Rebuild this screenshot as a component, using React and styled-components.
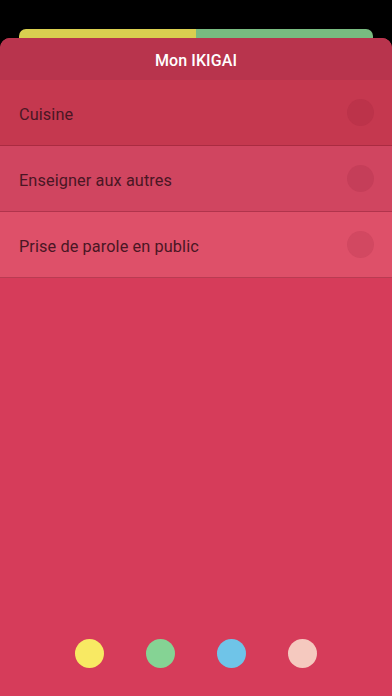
import React from "react";
import styled, { createGlobalStyle } from "styled-components";

const Global = createGlobalStyle`
  html, body { margin: 0; padding: 0; background: #000; }
  body { font-family: Roboto, "Noto Sans", sans-serif; }
  #root { min-height: 696px; }
`;

const Screen = styled.div`
  width: 392px;
  height: 696px;
  background: #000;
  display: flex;
  flex-direction: column;
  padding-top: 29px;
  box-sizing: border-box;
  overflow: hidden;
`;

const BackCard = styled.div`
  margin: 0 19px;
  height: 9px;
  border-radius: 7px 7px 0 0;
  display: flex;
  overflow: hidden;
  flex-shrink: 0;
`;

const BackHalf = styled.div`
  flex: 1;
  background: ${(p) => p.$color};
`;

const Card = styled.div`
  flex: 1;
  background: #d63c5a;
  border-radius: 10px 10px 0 0;
  display: flex;
  flex-direction: column;
  overflow: hidden;
`;

const Header = styled.div`
  height: 42px;
  background: #b8344d;
  display: flex;
  align-items: center;
  justify-content: center;
  padding-top: 2px;
  box-sizing: border-box;
  color: #fff;
  font-size: 16px;
  font-weight: 500;
  letter-spacing: 0.1px;
`;

const List = styled.div`
  display: flex;
  flex-direction: column;
`;

const Row = styled.div`
  height: 65px;
  background: ${(p) => p.$bg};
  border-bottom: 1px solid rgba(120, 20, 40, 0.35);
  display: flex;
  align-items: center;
  justify-content: space-between;
  padding: 0 18px 0 19px;
`;

const Label = styled.span`
  font-size: 16.3px;
  letter-spacing: 0.1px;
  color: #4a1624;
  padding-top: 3px;
`;

const Check = styled.div`
  width: 27px;
  height: 27px;
  border-radius: 50%;
  background: rgba(120, 20, 40, 0.12);
`;

const Spacer = styled.div`
  flex: 1;
`;

const Dots = styled.div`
  display: flex;
  justify-content: center;
  gap: 42px;
  padding-bottom: 28px;
`;

const Dot = styled.div`
  width: 29px;
  height: 29px;
  border-radius: 50%;
  background: ${(p) => p.$color};
`;

const rows = [
  { label: "Cuisine", bg: "#c5384f" },
  { label: "Enseigner aux autres", bg: "#d04560" },
  { label: "Prise de parole en public", bg: "#de5069" },
];

const dots = ["#f8e963", "#85d394", "#6fc4e8", "#f5c9bf"];

export default function App() {
  return (
    <>
      <Global />
      <Screen>
        <BackCard>
          <BackHalf $color="#d9cf50" />
          <BackHalf $color="#78bb80" />
        </BackCard>
        <Card>
          <Header>Mon IKIGAI</Header>
          <List>
            {rows.map((r) => (
              <Row key={r.label} $bg={r.bg}>
                <Label>{r.label}</Label>
                <Check />
              </Row>
            ))}
          </List>
          <Spacer />
          <Dots>
            {dots.map((c) => (
              <Dot key={c} $color={c} />
            ))}
          </Dots>
        </Card>
      </Screen>
    </>
  );
}
